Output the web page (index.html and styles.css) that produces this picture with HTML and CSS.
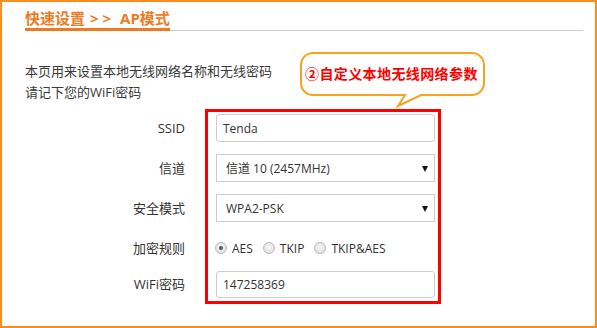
FILE: index.html
```html
<!DOCTYPE html>
<html lang="zh-CN">
<head>
<meta charset="utf-8">
<title>快速设置 AP模式</title>
<link rel="stylesheet" href="styles.css">
</head>
<body>
<div class="page">
  <div class="title-bar"><span class="title">快速设置<span class="sep">&gt; &gt;</span>AP模式</span></div>
  <div class="desc">
    <div>本页用来设置本地无线网络名称和无线密码</div>
    <div>请记下您的WiFi密码</div>
  </div>
  <div class="form">
    <div class="labels">
      <div class="row">SSID</div>
      <div class="row">信道</div>
      <div class="row">安全模式</div>
      <div class="row row-radio">加密规则</div>
      <div class="row row-last">WiFi密码</div>
    </div>
    <div class="fields">
      <div class="row"><div class="input">Tenda</div></div>
      <div class="row"><div class="input select">信道 10 (2457MHz)<span class="arrow"></span></div></div>
      <div class="row"><div class="input select">WPA2-PSK<span class="arrow"></span></div></div>
      <div class="row row-radio radios">
        <span class="radio checked"></span><span class="rlabel">AES</span>
        <span class="radio"></span><span class="rlabel">TKIP</span>
        <span class="radio"></span><span class="rlabel">TKIP&amp;AES</span>
      </div>
      <div class="row row-last"><div class="input">147258369</div></div>
    </div>
  </div>
  <svg class="bubble" width="192" height="62" viewBox="0 0 192 62">
    <path d="M15,3 H174 A12,12 0 0 1 186,15 V33 A12,12 0 0 1 174,45 H123 L100,56 L107,45 H15 A12,12 0 0 1 3,33 V15 A12,12 0 0 1 15,3 Z" fill="#fff" stroke="#f5a41f" stroke-width="2"/>
  </svg>
  <div class="bubble-text">②自定义本地无线网络参数</div>
</div>
</body>
</html>
```
FILE: styles.css
```css
html, body {
  margin: 0;
  padding: 0;
  background: #fff;
}
body {
  font-family: "Open Sans", "Noto Sans CJK SC", sans-serif;
  font-size: 13px;
  color: #333;
}
.page {
  position: relative;
  box-sizing: border-box;
  width: 597px;
  height: 328px;
  border: 2px solid #fb8c1d;
  padding: 0 12px 0 23px;
}
.title-bar {
  margin-top: 6px;
  border-bottom: 1px solid #cfcfcf;
  display: flex;
}
.title {
  font-size: 15px;
  font-weight: bold;
  line-height: 20px;
  color: #f07a22;
  border-bottom: 3px solid #f07a22;
  margin-bottom: -1px;
}
.sep {
  margin: 0 9px 0 5px;
}
.desc {
  padding-top: 30px;
  line-height: 21px;
  color: #3a3a3a;
}
.form {
  display: flex;
  gap: 20px;
  margin-top: 6px;
}
.labels {
  width: 160px;
  padding-top: 5px;
  text-align: right;
}
.labels .row {
  height: 28px;
  line-height: 28px;
  margin-bottom: 12px;
}
.fields {
  box-sizing: border-box;
  width: 236px;
  border: 3px solid #f00;
  padding: 2px 3px 3px 8px;
  font-size: 12px;
}
.fields .row {
  height: 28px;
  margin-bottom: 12px;
}
.labels .row-radio, .fields .row-radio {
  margin-bottom: 9px;
}
.labels .row-last, .fields .row-last {
  height: 27px;
  line-height: 27px;
  margin-bottom: 0;
}
.input {
  position: relative;
  box-sizing: border-box;
  height: 100%;
  border: 1px solid #ccc;
  border-radius: 3px;
  padding: 0 6px;
  display: flex;
  align-items: center;
  color: #333;
  background: #fff;
}
.select {
  border-radius: 0;
  padding-left: 9px;
}
.arrow {
  position: absolute;
  right: 6px;
  top: 50%;
  margin-top: -2px;
  width: 0;
  height: 0;
  border-left: 3.5px solid transparent;
  border-right: 3.5px solid transparent;
  border-top: 6px solid #111;
}
.radios {
  display: flex;
  align-items: center;
  margin-left: -1px;
}
.radio {
  box-sizing: border-box;
  width: 12px;
  height: 12px;
  border-radius: 50%;
  border: 1px solid #b9b9b9;
  background: radial-gradient(circle at 50% 40%, #f4f4f4, #dcdcdc);
  position: relative;
  flex: none;
}
.radio.checked::after {
  content: "";
  position: absolute;
  left: 3px;
  top: 3px;
  width: 4px;
  height: 4px;
  border-radius: 50%;
  background: #555;
}
.rlabel {
  margin-left: 5px;
  margin-right: 10px;
}
.bubble {
  position: absolute;
  left: 296px;
  top: 48px;
}
.bubble-text {
  position: absolute;
  left: 303px;
  top: 61px;
  line-height: 20px;
  font-size: 14px;
  font-weight: bold;
  letter-spacing: 0.4px;
  color: #f00;
  font-family: "Noto Sans CJK SC", sans-serif;
}
```
